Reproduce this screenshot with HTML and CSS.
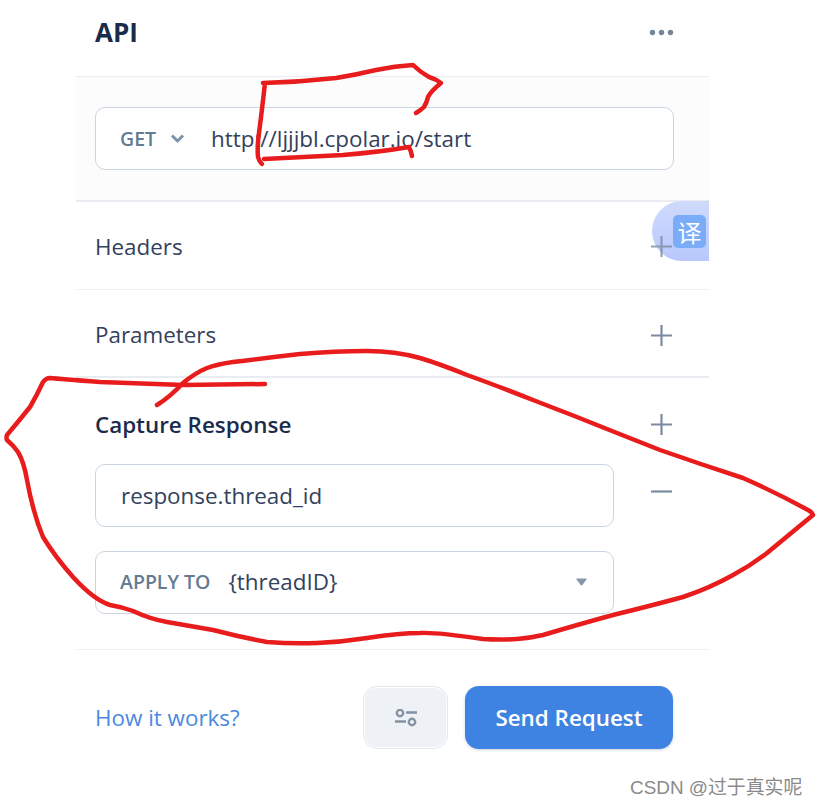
FILE: index.html
```
<!DOCTYPE html>
<html lang="en">
<head>
<meta charset="utf-8">
<title>API</title>
<link rel="stylesheet" href="styles.css">
</head>
<body>
<div class="page">
  <main class="panel">
    <header class="panel-head">
      <h1 class="title">API</h1>
      <svg class="dots" width="25" height="7" viewBox="0 0 25 7"><circle cx="3.5" cy="3.5" r="2.7"/><circle cx="12.5" cy="3.5" r="2.7"/><circle cx="21.5" cy="3.5" r="2.7"/></svg>
    </header>
    <section class="url-section">
      <div class="field url-field">
        <span class="method">GET</span>
        <svg class="chevron" width="15" height="11" viewBox="0 0 15 11"><path d="M2 2.5l5.5 5.5 5.5-5.5"/></svg>
        <span class="value url-value">http://ljjjbl.cpolar.io/start</span>
      </div>
    </section>
    <section class="row">
      <span class="row-label">Headers</span>
      <svg class="sign plus-top" width="21" height="21" viewBox="0 0 21 21"><path d="M0 10.5h21M10.5 0v21"/></svg>
    </section>
    <section class="row row-thick">
      <span class="row-label">Parameters</span>
      <svg class="sign" width="21" height="21" viewBox="0 0 21 21"><path d="M0 10.5h21M10.5 0v21"/></svg>
    </section>
    <section class="capture">
      <div class="capture-head">
        <span class="row-label strong">Capture Response</span>
        <svg class="sign" width="21" height="21" viewBox="0 0 21 21"><path d="M0 10.5h21M10.5 0v21"/></svg>
      </div>
      <div class="capture-line">
        <div class="field capture-field"><span class="value">response.thread_id</span></div>
        <svg class="sign" width="21" height="21" viewBox="0 0 21 21"><path d="M0 10.5h21"/></svg>
      </div>
      <div class="capture-line">
        <div class="field capture-field apply-field">
          <span class="method apply">APPLY TO</span>
          <span class="value">{threadID}</span>
          <svg class="caret" width="11" height="8" viewBox="0 0 11 8"><path d="M1 0.5h9q1 0 .4 1l-4 5.500q-.9 .9-1.800 0l-4-5.500q-.6-1 .4-1z"/></svg>
        </div>
      </div>
    </section>
    <footer class="panel-foot">
      <a class="help" href="#">How it works?</a>
      <div class="actions">
        <button class="btn-settings" type="button" aria-label="Settings">
          <svg width="24" height="18" viewBox="0 0 24 18"><g><circle cx="6" cy="4" r="3.200"/><path d="M12 3.500h11M1 12.500h11"/><circle cx="18" cy="13" r="3.200"/></g></svg>
        </button>
        <button class="btn-send" type="button">Send Request</button>
      </div>
    </footer>
  </main>

  <div class="translate"><span class="translate-icon">译</span></div>

  <svg class="scribble" width="817" height="808" viewBox="0 0 817 808">
    <path d="M416 113Q421 110 424 107Q427 102 428 97Q431 91 441 83Q436 79 429 77Q420 72 413 65Q395 66 376 70Q355 75 336 78Q300 82 263 83M265 83Q262 110 259 133Q257 147 258 157Q259 161 262 164"/>
    <path d="M264 159L343 155Q380 152 409 147Q411 151 412 156"/>
    <path d="M265 384L183 385L100 382Q60 379 50 378Q46 378 43 382Q37 395 30 407Q18 422 7 435Q6 438 7 440Q14 446 18 452Q24 462 27 480Q33 513 43 537Q56 558 73 577Q94 600 110 605Q122 607 133 611Q150 619 167 622L213 630Q240 637 267 642Q292 644 317 643Q342 642 367 638Q400 633 420 633Q435 632 483 639Q500 640 517 639Q530 638 543 635Q580 624 613 615Q650 606 683 597Q710 588 733 575Q750 566 767 553Q790 534 813 515Q812 512 808 510Q775 492 743 478Q700 464 660 450Q640 442 617 433Q575 416 533 400Q495 385 467 375Q440 364 420 358Q395 351 367 351Q335 351 300 354Q265 358 233 362Q218 364 207 368Q195 373 183 383Q170 397 157 405"/>
  </svg>

  <div class="watermark">CSDN @过于真实呢</div>
</div>
</body>
</html>
```
FILE: styles.css
```
* { box-sizing: border-box; }
html, body { margin: 0; padding: 0; background: #fff; }
body { font-family: "Open Sans", "Noto Sans", sans-serif; color: #33415c; }

.page { position: relative; width: 817px; height: 808px; overflow: hidden; }
.panel { width: 633px; margin-left: 76px; }

.panel-head {
  height: 77px;
  padding: 0 35px 0 19px;
  display: flex;
  align-items: center;
  justify-content: space-between;
  border-bottom: 1px solid #e9edf2;
}
.title { margin: 0; font-size: 26px; font-weight: 700; line-height: 36px; color: #1a2b4b; position: relative; top: -6px; }
.dots { fill: #74869a; position: relative; top: -6px; }

.url-section {
  padding: 30px 35px 30px 19px;
  background: #fcfcfc;
  border-bottom: 2px solid #e9edf2;
}
.field {
  height: 63px;
  display: flex;
  align-items: center;
  padding: 0 25px;
  background: #fff;
  border: 1px solid #cbd5e0;
  border-radius: 10px;
}
.method { margin-left: -1px; font-size: 19.500px; font-weight: 600; color: #667a92; }
.chevron { margin-left: 14px; fill: none; stroke: #7f93a8; stroke-width: 3; }
.value { font-size: 22.400px; color: #33415c; }
.url-value { margin-left: 26px; }

.row {
  height: 88px;
  padding: 2px 37px 0 19px;
  display: flex;
  align-items: center;
  justify-content: space-between;
  border-bottom: 1px solid #edf0f4;
}
.row-thick { border-bottom: 2px solid #e9edf2; padding-top: 3px; }
.row-label { font-size: 22.400px; color: #33415c; }
.row-label.strong { font-weight: 600; color: #1a2b4b; }
.sign { flex: none; fill: none; stroke: #7a8ca0; stroke-width: 2.2; }
.row-thick .sign { margin-top: 2px; }
.plus-top { position: relative; z-index: 2; opacity: .8; }

.capture {
  padding: 0 37px 35px 19px;
  border-bottom: 1px solid #edf0f4;
}
.capture-head {
  height: 86px;
  padding-top: 6px;
  display: flex;
  align-items: center;
  justify-content: space-between;
}
.capture-line {
  display: flex;
  align-items: center;
  justify-content: space-between;
}
.capture-line + .capture-line { margin-top: 24px; }
.capture-field { width: 519px; flex: none; }
.apply-field { padding-bottom: 2px; }
.capture-line .sign { margin-bottom: 9px; }
.apply { margin-right: 18px; }
.caret { margin-left: auto; margin-right: 1px; fill: #8697ab; }

.panel-foot {
  padding: 36px 36px 0 19px;
  display: flex;
  align-items: center;
  justify-content: space-between;
}
.help { font-size: 22.400px; color: #4a8ae0; text-decoration: none; }
.actions { display: flex; gap: 17px; }
.btn-settings {
  width: 85px;
  height: 63px;
  padding: 0;
  display: flex;
  align-items: center;
  justify-content: center;
  background: #eef2f6;
  border: 1px solid #e2e8f0;
  box-shadow: inset 0 0 0 1px #fff;
  border-radius: 14px;
}
.btn-settings g { fill: none; stroke: #8593a5; stroke-width: 2.400; }
.btn-send {
  width: 208px;
  height: 63px;
  padding: 0;
  border: 0;
  border-radius: 14px;
  background: #3f83e2;
  box-shadow: 0 1px 3px rgba(40, 70, 120, .25);
  font-family: inherit;
  font-size: 22.400px;
  font-weight: 600;
  color: #fff;
}

.translate {
  position: absolute;
  left: 652px;
  top: 201px;
  width: 57px;
  height: 60px;
  padding: 14px 3px 0 21px;
  border-radius: 30px 0 0 30px;
  background: linear-gradient(180deg, #cfdafb, #b9c8fd);
}
.translate-icon {
  display: block;
  width: 33px;
  height: 33px;
  border-radius: 5px;
  background: #7aacf8;
  color: #fff;
  font-family: "Noto Sans CJK SC", sans-serif;
  font-size: 24px;
  line-height: 33px;
  text-align: center;
}

.scribble { position: absolute; left: 0; top: 0; pointer-events: none; fill: none; stroke: #e81c1c; stroke-width: 4.500; stroke-linecap: round; stroke-linejoin: round; }

.watermark {
  position: absolute;
  left: 630px;
  top: 776px;
  font-family: "Liberation Sans", "Noto Sans CJK SC", sans-serif;
  font-size: 18.900px;
  line-height: 24px;
  color: #8a8a8a;
  white-space: nowrap;
}
```
